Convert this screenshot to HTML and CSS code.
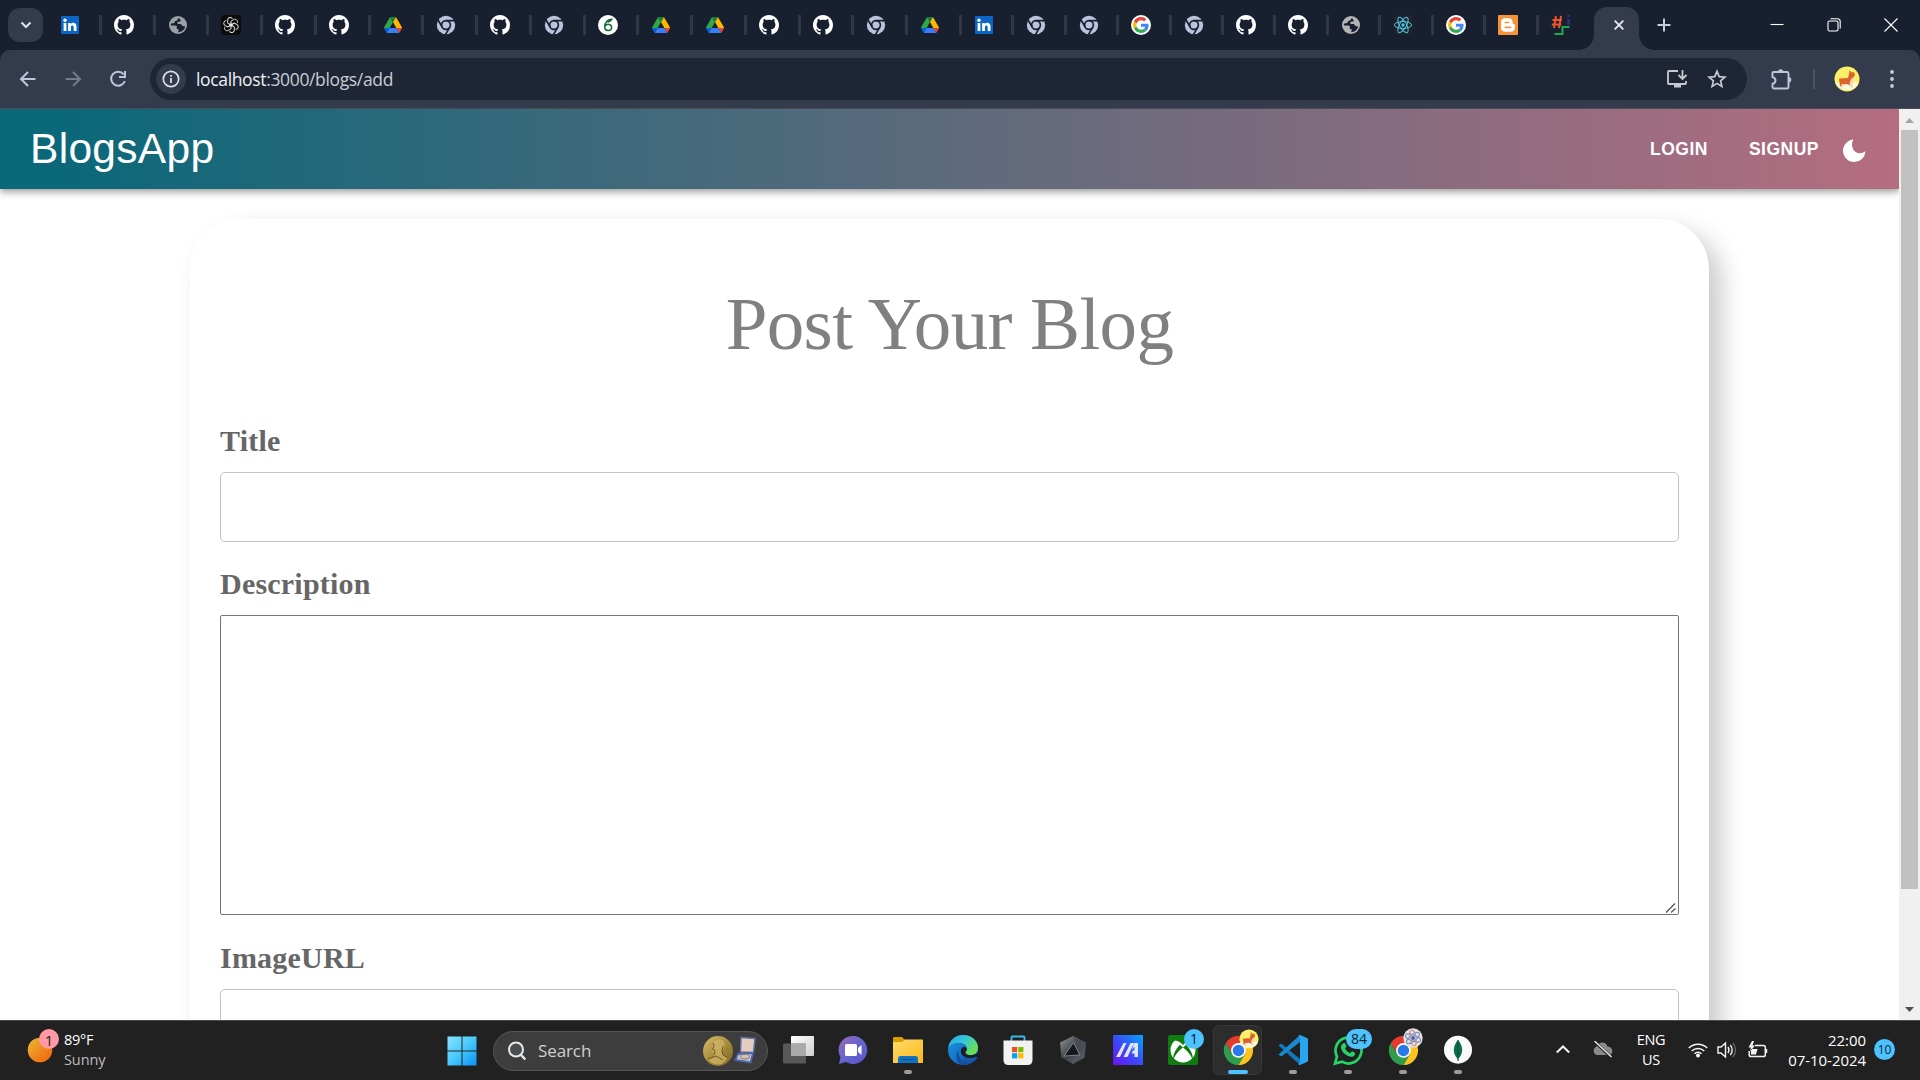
FILE: index.html
```html
<!DOCTYPE html>
<html lang="en">
<head>
<meta charset="utf-8">
<title>BlogsApp</title>
<link rel="stylesheet" href="styles.css">
</head>
<body>
<svg class="defs" width="0" height="0" aria-hidden="true">
  <defs>
    <linearGradient id="sun" x1="0" y1="0" x2="1" y2="1"><stop offset="0" stop-color="#e9bd35"/><stop offset=".45" stop-color="#ee8f22"/><stop offset="1" stop-color="#f2600c"/></linearGradient>
    <linearGradient id="win" gradientUnits="userSpaceOnUse" x1="0" y1="0" x2="30" y2="30"><stop offset="0" stop-color="#8fe3ff"/><stop offset=".5" stop-color="#46c8fb"/><stop offset="1" stop-color="#0a8ff5"/></linearGradient>
    <linearGradient id="chat" x1="0" y1="0" x2="1" y2="1"><stop offset="0" stop-color="#9a68b4"/><stop offset=".5" stop-color="#6665cf"/><stop offset="1" stop-color="#5a55c8"/></linearGradient>
    <linearGradient id="fold" x1="0" y1="0" x2="1" y2="1"><stop offset="0" stop-color="#ffdc6b"/><stop offset="1" stop-color="#fdb819"/></linearGradient>
    <linearGradient id="edgeTop" x1="0" y1="0" x2="1" y2=".6"><stop offset="0" stop-color="#2aa6e2"/><stop offset=".5" stop-color="#33c6dc"/><stop offset="1" stop-color="#6be04e"/></linearGradient>
    <linearGradient id="edgeLow" x1="0" y1="0" x2="1" y2="1"><stop offset="0" stop-color="#1993e0"/><stop offset="1" stop-color="#0f5cb4"/></linearGradient>
    <linearGradient id="asus" x1="0" y1="1" x2="1" y2="0"><stop offset="0" stop-color="#6a12f5"/><stop offset=".5" stop-color="#3a4cf8"/><stop offset="1" stop-color="#05a6fb"/></linearGradient>
    <linearGradient id="steel" x1="0" y1="0" x2="1" y2="1"><stop offset="0" stop-color="#93989d"/><stop offset=".5" stop-color="#3c4147"/><stop offset="1" stop-color="#70777e"/></linearGradient>
    <linearGradient id="gold" x1="0" y1="0" x2="1" y2="1"><stop offset="0" stop-color="#d8bf6e"/><stop offset=".5" stop-color="#a98c3c"/><stop offset="1" stop-color="#7c6424"/></linearGradient>
    <linearGradient id="paper" x1="0" y1="0" x2="1" y2="1"><stop offset="0" stop-color="#ffffff"/><stop offset="1" stop-color="#cfcfcf"/></linearGradient>
  </defs>
  <symbol id="linkedin" viewBox="0 0 20 20"><rect x="1" y="1" width="18" height="18" rx="1" fill="#0a66c2"/><rect x="3.6" y="8" width="2.8" height="8" fill="#fff"/><circle cx="5" cy="5.2" r="1.7" fill="#fff"/><path d="M8.1 8h2.7v1.2c1.4-2.3 5.7-1.9 5.7 2.3V16h-2.8v-4c0-2.2-2.8-2.1-2.8 0v4H8.1z" fill="#fff"/></symbol>
  <symbol id="github" viewBox="0 0 16 16"><path fill="#fff" d="M8 0C3.58 0 0 3.58 0 8c0 3.54 2.29 6.53 5.47 7.59.4.07.55-.17.55-.38 0-.19-.01-.82-.01-1.49-2.01.37-2.53-.49-2.69-.94-.09-.23-.48-.94-.82-1.13-.28-.15-.68-.52-.01-.53.63-.01 1.08.58 1.23.82.72 1.21 1.87.87 2.33.66.07-.52.28-.87.51-1.07-1.78-.2-3.64-.89-3.64-3.95 0-.87.31-1.59.82-2.15-.08-.2-.36-1.02.08-2.12 0 0 .67-.21 2.2.82.64-.18 1.32-.27 2-.27.68 0 1.36.09 2 .27 1.53-1.04 2.2-.82 2.2-.82.44 1.1.16 1.92.08 2.12.51.56.82 1.27.82 2.15 0 3.07-1.87 3.75-3.65 3.95.29.25.54.73.54 1.48 0 1.07-.01 1.93-.01 2.2 0 .21.15.46.55.38A8.013 8.013 0 0016 8c0-4.42-3.58-8-8-8z"/></symbol>
  <symbol id="globe" viewBox="0 0 20 20"><circle cx="10" cy="10" r="9" fill="currentColor"/><path fill="#182030" d="M11.2 3.2C9.4 3.4 10 5 9 5.6c-1 .6-2.2.2-2.3 1.5 0 1-1 1.3-2 1.2-1 0-1.7.3-2 1.2.2 1.3 1.3 1.1 2.3 1.1 1.4 0 3-.3 3.7.7.6 1.1-.4 1.6.2 2.5.6.7 1.7.1 1.9 1.1.1.9-.8 1.2-.7 2.300 3.500 0 6.500-2.400 7-5.400-.8-.9-2-.4-2.900-1-.7-.5-.5-1.600-1.500-1.800-1.100-.3-2.200.3-3-.3-.7-.6-.4-1.800.5-2 .9-.3 1.900.2 2.500-.5.5-.8-.5-1.700-1.500-3z"/></symbol>
  <symbol id="openai" viewBox="0 0 20 20"><rect width="20" height="20" rx="4" fill="#0c0c0c"/><g fill="none" stroke="#eee" stroke-width=".9"><path id="petal" d="M10 12.400V6.200l2.700-1.600c2.600-1.300 4.700 1.600 3.400 3.600"/><use href="#petal" transform="rotate(60 10 10)"/><use href="#petal" transform="rotate(120 10 10)"/><use href="#petal" transform="rotate(180 10 10)"/><use href="#petal" transform="rotate(240 10 10)"/><use href="#petal" transform="rotate(300 10 10)"/></g></symbol>
  <symbol id="drive" viewBox="0 -4.650 87.300 87.300"><path d="m6.600 66.850 3.850 6.650c.8 1.400 1.950 2.500 3.300 3.300l13.750-23.800h-27.500c0 1.550.4 3.100 1.200 4.500z" fill="#0066da"/><path d="m43.650 25-13.750-23.800c-1.350.8-2.500 1.900-3.300 3.300l-25.400 44a9.060 9.060 0 0 0-1.200 4.500h27.500z" fill="#2ea84b"/><path d="m73.550 76.800c1.350-.8 2.500-1.900 3.300-3.300l1.600-2.750 7.650-13.250c.8-1.400 1.200-2.950 1.200-4.500h-27.500l5.850 11.500z" fill="#ea4335"/><path d="m43.650 25 13.750-23.800c-1.350-.8-2.900-1.200-4.500-1.200h-18.500c-1.600 0-3.150.45-4.500 1.200z" fill="#11803a"/><path d="m59.800 53h-32.300l-13.750 23.800c1.350.8 2.900 1.200 4.500 1.200h50.800c1.600 0 3.150-.45 4.500-1.200z" fill="#3a80f4"/><path d="m73.400 26.500-12.700-22c-.8-1.400-1.950-2.500-3.300-3.300l-13.750 23.800 16.150 28h27.450c0-1.550-.4-3.100-1.200-4.500z" fill="#ffb800"/></symbol>
  <symbol id="chromium" viewBox="0 0 48 48"><circle cx="24" cy="24" r="22" fill="#b9c3dc"/><g fill="none" stroke="#182030" stroke-width="4"><circle cx="24" cy="24" r="10.500"/><path d="M24 13.500H47M33.100 29.200 21.500 49.300M14.900 29.200 3.200 9.100"/></g></symbol>
  <symbol id="six" viewBox="0 0 20 20"><circle cx="10" cy="10" r="10" fill="#fff"/><path d="M14.500 4.200c-4.500-.5-8 3.500-7.800 8 .2 4.200 6.600 4.400 6.900.6.200-3.900-4.800-4.600-6.500-1.600M9 6.600c1.500-1.800 3.500-1.800 4.500-2-.8 1.500-2 2.400-4 2.500" fill="none" stroke="#176b3a" stroke-width="1.500"/></symbol>
  <symbol id="google" viewBox="0 0 48 48"><circle cx="24" cy="24" r="24" fill="#fff"/><g transform="translate(5 5) scale(.79)"><path fill="#EA4335" d="M24 9.500c3.540 0 6.710 1.220 9.210 3.600l6.850-6.850C35.900 2.380 30.470 0 24 0 14.620 0 6.510 5.380 2.560 13.220l7.980 6.190C12.430 13.720 17.740 9.500 24 9.500z"/><path fill="#4285F4" d="M46.980 24.550c0-1.570-.15-3.090-.38-4.550H24v9.020h12.940c-.58 2.960-2.260 5.480-4.780 7.180l7.730 6c4.510-4.180 7.090-10.360 7.090-17.650z"/><path fill="#FBBC05" d="M10.530 28.590c-.48-1.450-.76-2.990-.76-4.590s.27-3.140.76-4.590l-7.980-6.190C.92 16.460 0 20.120 0 24c0 3.880.92 7.540 2.560 10.780l7.970-6.190z"/><path fill="#34A853" d="M24 48c6.480 0 11.930-2.130 15.890-5.810l-7.730-6c-2.150 1.450-4.920 2.300-8.160 2.300-6.260 0-11.570-4.220-13.470-9.910l-7.980 6.190C6.510 42.620 14.620 48 24 48z"/></g></symbol>
  <symbol id="react" viewBox="0 0 20 20"><rect x=".5" y=".5" width="19" height="19" fill="#20232a"/><g fill="none" stroke="#4cc4e0" stroke-width="1"><ellipse cx="10" cy="10" rx="8.600" ry="3.400"/><ellipse cx="10" cy="10" rx="8.600" ry="3.400" transform="rotate(60 10 10)"/><ellipse cx="10" cy="10" rx="8.600" ry="3.400" transform="rotate(120 10 10)"/></g><circle cx="10" cy="10" r="1.700" fill="#4cc4e0"/></symbol>
  <symbol id="blogger" viewBox="0 0 20 20"><rect width="20" height="20" rx="1" fill="#f6923a"/><path fill="#fff" d="M7 3.200h3.600c2.400 0 4 1.600 4 3.700 0 1.700.3 2 1.300 2.200.7.100 1 .5 1 1.200v2.500c0 2.300-1.600 4-4 4H7c-2.300 0-4-1.600-4-4V7.200c0-2.400 1.600-4 4-4z"/><path d="M7.400 7.500h3M7.400 12.400h5" stroke="#f6923a" stroke-width="1.700" stroke-linecap="round"/></symbol>
  <symbol id="hashi" viewBox="0 0 20 20"><path d="M5 1 3 13M10 1 8 13M1.500 5H11M.8 9.500h9.500" stroke="#f0552c" stroke-width="2"/><path d="M17.500 0v2M17.500 4v6" stroke="#35308c" stroke-width="2.400"/><path d="M18.500 12h-7v7h-8" fill="none" stroke="#1cab4c" stroke-width="2"/></symbol>
  <symbol id="chrome" viewBox="0 0 48 48"><path fill="#e33b2e" d="M4.950 13A22 22 0 0 1 43.050 13H24L14.470 29.500z"/><path fill="#fcc31e" d="M43.050 13A22 22 0 0 1 24 46L33.530 29.500 24 13z"/><path fill="#2f9e4c" d="M24 46A22 22 0 0 1 4.950 13L14.470 29.500H33.530z"/><circle cx="24" cy="24" r="11" fill="#fff"/><circle cx="24" cy="24" r="8.600" fill="#2b78e9"/></symbol>
  <symbol id="corgi" viewBox="0 0 26 26"><circle cx="13" cy="13" r="12.500" fill="#fdf069"/><path d="M1.500 16.500h23A12.500 12.500 0 0 1 1.500 16.500z" fill="#fbf8e2"/><path d="M5 12.500l9-.5 1-4L15.500 4l2 2.500L20 6l1 3-2 3-.5 4-2 3.500-4-1.500-4 .5-1.500 2H6z" fill="#dd6427"/><path d="M17 13l3-2 .5 2.500-2 3v5h-2l-1-4zM7.500 18l2 .5-.5 3H7.500z" fill="#f3d6ba"/></symbol>
</svg>

<header class="browser">
  <div class="tabstrip">
    <button class="tab-search"><svg width="12" height="8" viewBox="0 0 12 8"><path d="M1.500 1.500 6 6l4.500-4.500" fill="none" stroke="#dfe3ee" stroke-width="2"/></svg></button>
    <nav class="tabs">
      <span class="tab"><svg><use href="#linkedin"/></svg></span>
      <span class="tab"><svg><use href="#github"/></svg></span>
      <span class="tab"><svg class="grey"><use href="#globe"/></svg></span>
      <span class="tab"><svg><use href="#openai"/></svg></span>
      <span class="tab"><svg><use href="#github"/></svg></span>
      <span class="tab"><svg><use href="#github"/></svg></span>
      <span class="tab"><svg class="small"><use href="#drive"/></svg></span>
      <span class="tab"><svg><use href="#chromium"/></svg></span>
      <span class="tab"><svg><use href="#github"/></svg></span>
      <span class="tab"><svg><use href="#chromium"/></svg></span>
      <span class="tab"><svg><use href="#six"/></svg></span>
      <span class="tab"><svg class="small"><use href="#drive"/></svg></span>
      <span class="tab"><svg class="small"><use href="#drive"/></svg></span>
      <span class="tab"><svg><use href="#github"/></svg></span>
      <span class="tab"><svg><use href="#github"/></svg></span>
      <span class="tab"><svg><use href="#chromium"/></svg></span>
      <span class="tab"><svg class="small"><use href="#drive"/></svg></span>
      <span class="tab narrow"><svg><use href="#linkedin"/></svg></span>
      <span class="tab narrow"><svg><use href="#chromium"/></svg></span>
      <span class="tab narrow"><svg><use href="#chromium"/></svg></span>
      <span class="tab narrow"><svg><use href="#google"/></svg></span>
      <span class="tab narrow"><svg><use href="#chromium"/></svg></span>
      <span class="tab narrow"><svg><use href="#github"/></svg></span>
      <span class="tab narrow"><svg><use href="#github"/></svg></span>
      <span class="tab narrow"><svg class="light"><use href="#globe"/></svg></span>
      <span class="tab narrow"><svg><use href="#react"/></svg></span>
      <span class="tab narrow"><svg><use href="#google"/></svg></span>
      <span class="tab narrow"><svg><use href="#blogger"/></svg></span>
      <span class="tab last"><svg><use href="#hashi"/></svg></span>
      <span class="tab-active"><svg width="10" height="10" viewBox="0 0 10 10"><path d="M.7.700l8.600 8.600M9.300.700.700 9.300" stroke="#e3e6ef" stroke-width="1.900"/></svg></span>
    </nav>
    <svg class="new-tab" width="14" height="14" viewBox="0 0 14 14"><path d="M7 .5v13M.5 7h13" stroke="#c6cce0" stroke-width="2"/></svg>
    <div class="window-buttons">
      <svg width="14" height="14" viewBox="0 0 14 14"><path d="M.5 6.500h13" stroke="#fff" stroke-width="1.100"/></svg>
      <svg width="14" height="14" viewBox="0 0 14 14"><rect x="1" y="3" width="10" height="10" rx="1.500" fill="none" stroke="#fff" stroke-width="1.100"/><path d="M3.500.800H10.500Q13.200.800 13.200 3.500V10.500" fill="none" stroke="#fff" stroke-width="1.100"/></svg>
      <svg width="14" height="14" viewBox="0 0 14 14"><path d="M.5.500l13 13M13.500.500l-13 13" stroke="#fff" stroke-width="1.100"/></svg>
    </div>
  </div>
  <div class="toolbar">
    <svg class="nav-icon" viewBox="0 0 20 20"><path d="M17.500 10H3M10 3 3 10l7 7" fill="none" stroke="#bfc6db" stroke-width="2"/></svg>
    <svg class="nav-icon dim" viewBox="0 0 20 20"><path d="M2.500 10H17M10 3l7 7-7 7" fill="none" stroke="#747b8c" stroke-width="2"/></svg>
    <svg class="nav-icon" viewBox="0 0 20 20"><path d="M15.600 5.300A7 7 0 1 0 16.800 12M17 2v6h-6" fill="none" stroke="#bfc6db" stroke-width="2"/></svg>
    <div class="omnibox">
      <span class="site-info"><svg width="18" height="18" viewBox="0 0 18 18"><circle cx="9" cy="9" r="7.700" fill="none" stroke="#dcdfe8" stroke-width="1.700"/><path d="M9 8v5M9 5v1.800" stroke="#dcdfe8" stroke-width="1.800"/></svg></span>
      <span class="url">localhost<i>:3000/blogs/add</i></span>
      <svg class="install" width="22" height="20" viewBox="0 0 22 20"><path d="M12 2H3Q2 2 2 3v11q0 1 1 1h16q1 0 1-1v-2M16.500 1v8.500M12.500 6l4 4 4-4" fill="none" stroke="#c8c8d0" stroke-width="1.800"/><path d="M8 15h7v3.500H8z" fill="#c8c8d0"/></svg>
      <svg width="20" height="20" viewBox="0 0 20 20"><path d="M10 2.300l2.200 5.300 5.700.5-4.300 3.700 1.300 5.600-4.900-3-4.900 3 1.300-5.600L2.100 8.100l5.700-.5z" fill="none" stroke="#c8c8d0" stroke-width="1.700"/></svg>
    </div>
    <svg class="puzzle" width="22" height="22" viewBox="0 0 22 22"><path d="M3.500 4H17q1.500 0 1.500 1.500V19q0 1.500-1.500 1.500H4.500Q2.500 20.500 2.500 19v-3q3-1 3-3.500T2.500 9V5Q2.500 4 3.500 4z" fill="none" stroke="#bfc6db" stroke-width="1.900"/><path d="M8 4a2.700 2.700 0 0 1 5.400 0zM18.500 9a2.800 2.800 0 0 1 0 5.600z" fill="#bfc6db"/></svg>
    <span class="divider"></span>
    <svg class="profile" width="26" height="26"><use href="#corgi"/></svg>
    <svg class="menu" width="4" height="18" viewBox="0 0 4 18"><g fill="#c6cce0"><circle cx="2" cy="2" r="1.900"/><circle cx="2" cy="9" r="1.900"/><circle cx="2" cy="16" r="1.900"/></g></svg>
  </div>
</header>

<div class="viewport">
  <div class="page">
    <div class="appbar">
      <h1 class="brand">BlogsApp</h1>
      <a class="link">LOGIN</a>
      <a class="link signup">SIGNUP</a>
      <svg class="moon" width="24" height="24" viewBox="0 0 24 24"><path fill="#fff" d="M11.500.600A11.200 11.200 0 1 0 23.400 12.300C19 15.800 12.500 14.300 10.700 9.200 9.600 6 9.900 3 11.500.600z"/></svg>
    </div>
    <form class="card">
      <h2>Post Your Blog</h2>
      <label>Title</label>
      <div class="field"></div>
      <label>Description</label>
      <div class="area"><svg width="12" height="12" viewBox="0 0 12 12"><path d="M1 10.500 10 1.500M6 10.500 10.500 6.500" stroke="#555" stroke-width="1.300"/></svg></div>
      <label>ImageURL</label>
      <div class="field"></div>
    </form>
  </div>
  <div class="scrollbar">
    <svg width="9" height="5" viewBox="0 0 9 5"><path d="M0 5 4.500 0 9 5z" fill="#a3a3a3"/></svg>
    <div class="thumb"></div>
    <svg width="9" height="5" viewBox="0 0 9 5"><path d="M0 0h9L4.500 5z" fill="#4f4f4f"/></svg>
  </div>
</div>

<footer class="taskbar">
  <div class="weather">
    <svg width="34" height="36" viewBox="0 0 34 36"><circle cx="13" cy="22" r="12.300" fill="url(#sun)"/><circle cx="22" cy="11" r="10" fill="#ff99a4"/></svg>
    <b>1</b>
    <p><span>89°F</span><em>Sunny</em></p>
  </div>
  <svg class="start" width="30" height="30" viewBox="0 0 30 30"><path fill="url(#win)" d="M.5.500h14v14H.5zM15.500.500h14v14h-14zM.5 15.500h14v14H.5zM15.500 15.500h14v14h-14z"/></svg>
  <div class="search">
    <svg width="20" height="20" viewBox="0 0 20 20"><circle cx="9" cy="8.500" r="7" fill="#4c4f52" stroke="#e8e8e8" stroke-width="2"/><path d="M13.500 13.500l4.800 4.800" stroke="#e8e8e8" stroke-width="2.400"/></svg>
    <span>Search</span>
    <svg width="54" height="32" viewBox="0 0 54 32"><circle cx="16" cy="16" r="15" fill="url(#gold)"/><path d="M11 8c2-4 9-5 11-1 1 4 0 7-2 9l1 4 5 3-6 6c-5 1.500-10 0-13-4l5-3 1-4-3-1 1-3-1-2z" fill="#cdb566" opacity=".75"/><path d="M11 8l1 3-1.500 3 2.500 1.500-.5 4M21 11l-1 5 1 4 5 3M6 24l8-3 7 4" fill="none" stroke="#6d5820"/><path d="M39 2.500l14 1-1.500 14-13-.5z" fill="#e7cdbd" stroke="#5e6fa8" stroke-width="1.500"/><path d="M36 19l15-1-2.500 9.500-15-2.500z" fill="#cdbfba" stroke="#4a66b4" stroke-width="1.800"/><ellipse cx="43" cy="21.500" rx="4.500" ry="2.500" fill="none" stroke="#8a7a78"/></svg>
  </div>
  <nav class="apps">
    <span class="app"><svg viewBox="0 0 32 32"><rect x="9" y="2" width="23" height="20" rx="1" fill="url(#paper)"/><rect x="1" y="9.500" width="23" height="20" rx="1" fill="#666" opacity=".8"/><path d="M9 9.500h15V22H9z" fill="#aaa"/></svg></span>
    <span class="app"><svg viewBox="0 0 32 32"><path d="M16 2a14 14 0 1 1-7 26L2 30l1.500-7A14 14 0 0 1 16 2z" fill="url(#chat)"/><rect x="8" y="10" width="12" height="12" rx="1.500" fill="#fff"/><path d="M21 14l3.500-3v10L21 18z" fill="#fff"/></svg></span>
    <span class="app open"><svg viewBox="0 0 32 32"><path d="M1 4q0-1 1-1h8l3 3v4H1z" fill="#dc9a05"/><path d="M1 8h9l3-2.500h17q1 0 1 1V29H1z" fill="url(#fold)"/><path d="M6 29v-4.500Q6 22 8.500 22h15q2.500 0 2.500 2.500V29z" fill="#0f73c4"/><path d="M9.500 25.500h13" stroke="#0a4c8a"/></svg></span>
    <span class="app"><svg viewBox="0 0 32 32"><circle cx="16" cy="16" r="15" fill="url(#edgeLow)"/><path d="M1.200 14C2.500 6 8.500 1 16 1c9 0 15 6 15 12.500 0 5-3.500 7.500-7.500 7.500-3.500 0-5-1.400-5-2.500s1.500-1.500 1.500-4c0-3-3.500-5.700-8-5.700-5 0-9 2-10.800 5.200z" fill="url(#edgeTop)"/><path d="M12 15.500c-2 8 4 13.500 11 12.500 3-.5 5-2 6-3.500C26 29.500 21 31.500 16 31c-7-1-9-11-4-15.500z" fill="#1450a0"/><path d="M16 13c-3 2-3 7 .5 9.500 4.500 3 10.500 1.700 13 .2L27 27c2-1 3.500-4 4-6l2-.5-2-2c-2 2-4.500 2.700-7.500 2.700-3.500 0-5.200-1.500-5.200-2.700S20 17 19.800 14.500C19 13 17.500 12.500 16 13z" fill="#1b1f24"/><path d="M17 22c4 3 9 2.500 12.500.7q1 .2.500 1.500C26 30 19 29 16 26z" fill="#1757a8"/></svg></span>
    <span class="app"><svg viewBox="0 0 32 32"><path d="M9.500 8V3.500Q9.500 2.500 10.500 2.500h11q1 0 1 1V8" fill="none" stroke="#3cb9ec" stroke-width="1.900"/><path d="M1.500 6.500h29V26q0 5-5 5h-19q-5 0-5-5z" fill="#f2f2f2"/><path d="M10 13h5.200v5.200H10z" fill="#f25022"/><path d="M16.200 13h5.200v5.200h-5.200z" fill="#7fba00"/><path d="M10 19.200h5.200v5.200H10z" fill="#00a4ef"/><path d="M16.200 19.200h5.200v5.200h-5.200z" fill="#ffb900"/></svg></span>
    <span class="app"><svg viewBox="0 0 32 32"><path d="M16 2l13 6.500-1.500 15L16 30 4.500 23.500 3 8.500z" fill="url(#steel)"/><path d="M16.500 9l6 12-15 1z" fill="#16191d"/><path d="M16 2l1.500 6 6 13.500-7.500 8.500 11.500-6.500L29 8.500z" fill="#4a5057" opacity=".6"/><path d="M16.500 8.500l-9.500 13.500 16-1M16.500 8.500l6.500 12.500" fill="none" stroke="#8f959b" stroke-width=".8"/></svg></span>
    <span class="app"><svg viewBox="0 0 32 32"><rect x="1" y="1" width="30" height="30" fill="url(#asus)"/><path d="M4 23 11.500 9h3L8 23zM11.500 23 18.500 9H22L15.500 23zM22 9h4v14h-3.500v-3.500h-3l1.500-3h1.500V12.500L20 16z" fill="#e2e6fb"/></svg></span>
    <span class="app"><svg viewBox="0 0 32 32"><rect x="1" y="1" width="30" height="30" rx="2" fill="#107c10"/><circle cx="16" cy="16" r="12.500" fill="#fff"/><path d="M7 6.500c4-.5 7 2.500 9 4.500 2-2 5-5 9-4.500-3-3-6-3.500-9-3.500s-6 .5-9 3.500zM16 13.500c-6 4.500-10 10.500-9 13C4.500 24 8 15 13 10.800zM16 13.500c6 4.500 10 10.500 9 13C27.500 24 24 15 19 10.800z" fill="#107c10"/></svg><b class="badge">1</b></span>
    <span class="app open active"><svg viewBox="-.700 -.700 49.400 49.400"><use href="#chrome"/></svg><svg class="avatar"><use href="#corgi"/></svg></span>
    <span class="app open"><svg viewBox="0 0 32 32"><path d="M1.500 11.500 3.500 10q.8-.5 1.500 0L23 25v6z" fill="#1278be"/><path d="M1.500 20.500 23 1v7L5 22q-.8.600-1.500 0z" fill="#1a8ad0"/><path d="M23 1l7 3q1 .5 1 1.500v21q0 1-1 1.500l-7 3q-1 .2-1.500-.5L23 28V4l-1.500-2.500Q22 .8 23 1z" fill="#2aa5f0"/></svg></span>
    <span class="app open"><svg viewBox="0 0 32 32"><path d="M3 29.500l2-7A13 13 0 1 1 10 27.700z" fill="none" stroke="#25d366" stroke-width="2.700"/><path d="M11 9.500c1-1 2-.5 2.500.5l1 2.500-1.500 2c1.200 2.200 2.800 3.700 5 4.700l2-2 3 1.500c.5 3-2 4.300-4 4-5.500-1-10-5.500-10-9.500 0-1.700.7-3 2-3.700z" fill="#25d366"/></svg><b class="badge wide">84</b></span>
    <span class="app open"><svg viewBox="-.700 -.700 49.400 49.400"><use href="#chrome"/></svg><svg class="avatar" viewBox="0 0 20 20"><circle cx="10" cy="10" r="9.700" fill="#e6e2e4"/><g fill="none" stroke="#6f8fc0"><ellipse cx="10" cy="10" rx="8" ry="3" transform="rotate(20 10 10)"/><ellipse cx="10" cy="10" rx="8" ry="3" transform="rotate(80 10 10)" stroke="#d08a84"/><ellipse cx="10" cy="10" rx="8" ry="3" transform="rotate(140 10 10)"/></g><circle cx="10" cy="10" r="2" fill="#4b62b8"/></svg></span>
    <span class="app open"><svg viewBox="0 0 32 32"><circle cx="16" cy="15.700" r="14" fill="#fafafa"/><path d="M16 6c6 7 5 14 .5 18.500L16 27l-.5-2.500C11 20 10 13 16 6z" fill="#0c6e4c"/><path d="M16 6v21" stroke="#064a36"/></svg></span>
  </nav>
  <div class="tray">
    <svg class="chev" width="14" height="9" viewBox="0 0 14 9"><path d="M.800 7.500 7 1.500l6.200 6" fill="none" stroke="#f2f2f2" stroke-width="2"/></svg>
    <svg class="cloud" width="21" height="17" viewBox="0 0 21 17"><path d="M5 14a4.500 4.500 0 0 1-.5-8.500C7 0 14 0 15.500 5.500c6 0 6.500 8.500 1 8.500z" fill="#8a8a8a"/><path d="M2 0l17 16" stroke="#222" stroke-width="3"/><path d="M2.500 0l17 16" stroke="#eee" stroke-width="1.400"/></svg>
    <span class="lang">ENG<br>US</span>
    <svg class="wifi" width="20" height="16" viewBox="0 0 20 16"><g fill="none" stroke="#f4f4f4" stroke-width="1.500"><path d="M.8 6a13 13 0 0 1 18.400 0M3.700 9a9 9 0 0 1 12.600 0M6.500 11.800a5 5 0 0 1 7 0"/></g><circle cx="10" cy="13.500" r="1.900" fill="#fff"/></svg>
    <svg class="sound" width="20" height="18" viewBox="0 0 20 18"><g fill="none" stroke="#f4f4f4" stroke-width="1.400"><path d="M1 6h3l4.500-4v14L4 12H1zM11 6q2 3 0 6M13.300 3.800q3.800 5.200 0 10.400"/><path d="M16 1.800q5 7.200 0 14.400" stroke="#666"/></g></svg>
    <svg class="battery" width="20" height="18" viewBox="0 0 20 18"><path d="M7 4.500h8.500q1.800 0 1.800 1.800v7.400q0 1.800-1.800 1.800H3q-1.800 0-1.800-1.800V10M18.500 8v4" fill="none" stroke="#f4f4f4" stroke-width="1.500"/><path d="M3 8h6.500L8 13.500H3zM4 0 .5 6.500h2.500L2 10.500l5-6H4.500L6 0z" fill="#f4f4f4"/></svg>
    <span class="clock">22:00<br>07-10-2024</span>
    <b class="count">10</b>
  </div>
</footer>
</body>
</html>
```
FILE: styles.css
```css
* { box-sizing: border-box; }
body {
  margin: 0;
  width: 1920px;
  height: 1080px;
  overflow: hidden;
  display: flex;
  flex-direction: column;
  background: #fff;
  font-family: "Open Sans", "Noto Sans", sans-serif;
}
svg { display: block; flex: none; }
.defs { position: absolute; }

/* browser chrome */
.browser { height: 109px; background: #182030; border-bottom: 1px solid #4a4c55; flex: none; }
.tabstrip { height: 50px; display: flex; align-items: center; }
.tab-search {
  width: 35px; height: 34px; margin: 0 5px 0 8px; padding: 0;
  border: 0; border-radius: 12px; background: #343b4c;
  display: flex; align-items: center; justify-content: center;
}
.tabs { display: flex; align-items: center; height: 50px; }
.tab {
  width: 53.760px; height: 20px; padding-left: 12px; flex: none;
  display: flex; align-items: center;
  border-right: 3px solid #303747;
}
.tab svg { width: 20px; height: 20px; }
.tab svg.small { width: 18px; height: 18px; margin: 0 1px; }
.tab.narrow { width: 52.460px; }
.tab.last { width: 55px; border-right-color: transparent; }
.grey { color: #9aa0a6; }
.light { color: #b4b4b4; }
.tab-active {
  width: 45px; height: 43px; align-self: flex-end;
  border-radius: 13px 13px 0 0; background: #343b4c;
  display: flex; align-items: center; justify-content: center;
  padding: 0 0 7px 5px; position: relative;
}
.tab-active::before, .tab-active::after {
  content: ""; position: absolute; bottom: 0; width: 15px; height: 15px;
}
.tab-active::before { left: -15px; background: radial-gradient(circle at 0 0, transparent 14.500px, #343b4c 15px); }
.tab-active::after { right: -15px; background: radial-gradient(circle at 100% 0, transparent 14.500px, #343b4c 15px); }
.new-tab { margin-left: 18px; }
.window-buttons { display: flex; gap: 43px; margin-left: auto; padding-right: 22px; }

.toolbar {
  height: 58px; background: #343b4c; border-radius: 10px 10px 0 0;
  display: flex; align-items: center; padding: 0 26px 0 18px;
}
.nav-icon { width: 20px; height: 20px; margin-right: 25px; }
.omnibox {
  width: 1597px; height: 42px; margin-left: -3px; padding: 0 20px 0 6px;
  border-radius: 21px; background: #1e2636;
  display: flex; align-items: center;
}
.site-info {
  width: 30px; height: 30px; border-radius: 50%; background: #343b4c;
  display: flex; align-items: center; justify-content: center;
}
.url { margin-left: 10px; font-size: 17.500px; color: #f0f1f5; letter-spacing: -.35px; }
.url i { font-style: normal; color: #c9ccd4; }
.install { margin-left: auto; margin-right: 19px; }
.puzzle { margin-left: 23px; }
.divider { width: 2px; height: 20px; margin-left: 21px; background: #4d5465; }
.profile { margin-left: 19px; }
.menu { margin-left: auto; }

/* web page */
.viewport { height: 911px; display: flex; overflow: hidden; flex: none; }
.page { width: 1899px; overflow: hidden; }
.appbar {
  height: 80px; padding: 0 33px 0 30px;
  display: flex; align-items: center;
  background: linear-gradient(90deg, #0a6879 0%, #0a6879 3%, #b56d80 100%);
  box-shadow: 0 2.500px 5px -1px rgba(0,0,0,.2), 0 5px 6px rgba(0,0,0,.14), 0 1px 12px rgba(0,0,0,.12);
  position: relative;
  color: #fff; font-family: "Liberation Sans", Arial, sans-serif;
}
.brand { margin: 0 auto 0 0; font-size: 42.500px; font-weight: 400; line-height: 1.235; letter-spacing: .00735em; }
.link { font-size: 17.500px; font-weight: 700; letter-spacing: .02857em; }
.signup { margin-left: 41px; }
.moon { margin: 3px 0 0 23px; }
.card {
  width: 1519px; height: 1100px; margin: 30px auto 0; padding: 30px;
  border-radius: 50px; background: #fff;
  box-shadow: 12.500px 12.500px 25px #ccc;
  font-family: "Liberation Serif", "Times New Roman", serif;
}
.card h2 {
  margin: 0; padding: 30px; text-align: center;
  font-size: 75px; font-weight: 400; line-height: 90px; letter-spacing: -.00833em; color: #808080;
}
.card label {
  display: block; margin: 20px 0 10px;
  font-size: 30px; font-weight: 700; line-height: 43px; letter-spacing: .007em; color: #666;
}
.field { height: 70px; border: 1px solid #c4c4c4; border-radius: 5px; }
.area {
  height: 300px; margin-bottom: 21px; border: 1px solid #767676; border-radius: 2px;
  display: flex; align-items: flex-end; justify-content: flex-end; padding: 0 1px;
}
.scrollbar {
  width: 21px; background: #f0f0f0;
  display: flex; flex-direction: column; align-items: center; padding: 9px 0 8px;
}
.thumb { width: 17px; height: 759px; margin: 7px 0 auto; background: #c1c1c1; }

/* taskbar */
.taskbar {
  height: 60px; flex: none; background: #212121; border-top: 1px solid #4b4b4b;
  display: flex; align-items: center; color: #fff;
}
.weather { width: 447px; padding-left: 27px; display: flex; align-items: center; position: relative; }
.weather svg { margin-top: -10px; }
.weather b { position: absolute; left: 39px; top: -2px; width: 20px; text-align: center; font-size: 15px; line-height: 20px; font-weight: 400; color: #222; }
.weather p { margin: -2px 0 0 3px; font-size: 14.500px; line-height: 20px; letter-spacing: -.3px; }
.weather span, .weather em { display: block; font-style: normal; }
.weather em { color: #bdbdbd; letter-spacing: -.1px; }
.start { margin-top: 0; }
.search {
  width: 275px; height: 40px; margin-left: 16px; padding: 0 11px 0 13px;
  border: 1px solid #565656; border-radius: 20px; background: #3d3d3d;
  display: flex; align-items: center; color: #d0d0d0; font-size: 17px; letter-spacing: -.1px;
}
.search span { margin: 0 auto 0 11px; }
.apps { display: flex; margin: -1px 0 0 2px; }
.app {
  width: 49px; height: 50px; margin: 0 3px; border-radius: 6px;
  display: flex; align-items: center; justify-content: center; position: relative;
}
.app svg { width: 32px; height: 32px; }
.app.active { background: #2d2d2d; border: 1px solid #383838; }
.app.open::after {
  content: ""; position: absolute; bottom: 1px; left: 50%; margin-left: -4px;
  width: 8px; height: 4px; border-radius: 2px; background: #9c9c9c;
}
.app.active::after { width: 20px; margin-left: -10px; bottom: 0; background: #4cc2ff; }
.badge {
  position: absolute; left: 26px; top: 4px; min-width: 20px; height: 20px; border-radius: 10px;
  background: #4cc2ff; color: #10222c; font-size: 14px; line-height: 20px; font-weight: 400; text-align: center;
}
.badge.wide { left: 23px; width: 26px; }
.app .avatar { position: absolute; left: 25px; top: 3px; width: 20px; height: 20px; }
.tray { margin: -2px 0 0 auto; padding-right: 25px; display: flex; align-items: center; font-size: 14.500px; line-height: 20px; }
.cloud { margin-left: 22px; }
.lang { width: 32px; margin-left: 22px; text-align: center; letter-spacing: -.3px; }
.wifi { margin-left: 21px; }
.sound { margin-left: 9px; }
.battery { margin-left: 11px; }
.clock { width: 98px; text-align: right; font-size: 15px; letter-spacing: -.05px; }
.count {
  width: 21px; height: 21px; margin-left: 8px; border-radius: 50%; background: #4cc2ff;
  color: #17252e; font-size: 12px; font-weight: 400; line-height: 21px; text-align: center;
}
```
